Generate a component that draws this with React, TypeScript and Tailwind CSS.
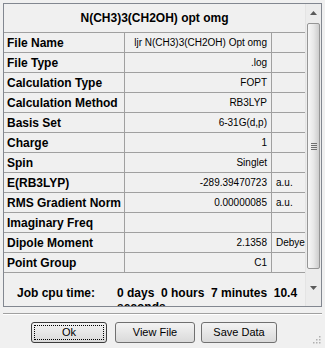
import React from 'react';

type Row = { label: string; value: string; unit?: string };

const rows: Row[] = [
  { label: 'File Name', value: 'ljr N(CH3)3(CH2OH) Opt omg' },
  { label: 'File Type', value: '.log' },
  { label: 'Calculation Type', value: 'FOPT' },
  { label: 'Calculation Method', value: 'RB3LYP' },
  { label: 'Basis Set', value: '6-31G(d,p)' },
  { label: 'Charge', value: '1' },
  { label: 'Spin', value: 'Singlet' },
  { label: 'E(RB3LYP)', value: '-289.39470723', unit: 'a.u.' },
  { label: 'RMS Gradient Norm', value: '0.00000085', unit: 'a.u.' },
  { label: 'Imaginary Freq', value: '' },
  { label: 'Dipole Moment', value: '2.1358', unit: 'Debye' },
  { label: 'Point Group', value: 'C1' },
];

function Arrow({ up }: { up?: boolean }) {
  return (
    <svg width="7" height="4" viewBox="0 0 7 4">
      <path d={up ? 'M0 4 L3.5 0 L7 4 Z' : 'M0 0 L3.5 4 L7 0 Z'} fill="#5a5a5a" />
    </svg>
  );
}

function ScrollBar() {
  return (
    <div className="w-[16px] flex flex-col bg-[#ececec] border-l border-[#e4e4e4]">
      <div className="h-[17px] flex items-center justify-center">
        <Arrow up />
      </div>
      <div className="mt-[2px] mx-[1px] h-[246px] rounded-[2px] border border-[#959595] bg-linear-to-r from-[#f7f7f7] via-[#e8e8e8] to-[#cdcdcd] flex flex-col items-center justify-center gap-[1px]">
        {[0, 1, 2, 3].map((i) => (
          <div key={i} className="w-[6px] h-[1px] bg-[#6f6f6f]" />
        ))}
      </div>
      <div className="flex-1 flex items-center justify-center">
        <Arrow />
      </div>
    </div>
  );
}

function Btn({ label, width, focus }: { label: string; width: string; focus?: boolean }) {
  return (
    <button
      type="button"
      className={`${width} h-[21px] rounded-[3px] border ${
        focus ? 'border-[#3c3c3c]' : 'border-[#707070]'
      } bg-linear-to-b from-[#f3f3f3] to-[#dadada] p-[2px] text-[11px] leading-none`}
    >
      <span
        className={`h-full w-full flex items-center justify-center ${
          focus ? 'border border-dotted border-black' : ''
        }`}
      >
        {label}
      </span>
    </button>
  );
}

export default function App() {
  return (
    <div className="w-[325px] h-[348px] bg-[#f0f0f0] overflow-hidden relative font-['Liberation_Sans',Arial,sans-serif] text-black">
      <div className="ml-[3px] mt-[3px] w-[319px] h-[304px] border border-[#828790] flex overflow-hidden">
        <div className="w-[301px] flex flex-col">
          <div className="h-[29px] shrink-0 border-b border-[#a0a0a0] flex items-center justify-center font-bold text-[12px]">
            N(CH3)3(CH2OH) opt omg
          </div>
          {rows.map((r) => (
            <div key={r.label} className="h-[20px] shrink-0 flex border-b border-[#a0a0a0]">
              <div className="w-[121px] border-r border-[#a0a0a0] pl-[3px] flex items-center font-bold text-[12px] whitespace-nowrap">
                {r.label}
              </div>
              <div className="w-[147px] border-r border-[#a0a0a0] pr-[4px] flex items-center justify-end text-[10px] whitespace-nowrap">
                {r.value}
              </div>
              <div className="flex-1 pl-[4px] flex items-center text-[10px] whitespace-nowrap overflow-hidden">
                {r.unit}
              </div>
            </div>
          ))}
          <div className="flex-1 overflow-hidden flex pt-[13px] font-bold text-[12px] leading-[14px]">
            <div className="w-[113px] pl-[13px] shrink-0">Job cpu time:</div>
            <div className="w-[185px] whitespace-pre-wrap">0 days  0 hours  7 minutes  10.4 seconds</div>
          </div>
        </div>
        <ScrollBar />
      </div>
      <div className="mt-[6px] mx-[3px] h-[2px] border-t border-[#a0a0a0] border-b border-b-white" />
      <div className="mt-[7px] flex pl-[31px]">
        <Btn label="Ok" width="w-[76px]" focus />
        <div className="w-[8px]" />
        <Btn label="View File" width="w-[80px]" />
        <div className="w-[6px]" />
        <Btn label="Save Data" width="w-[76px]" />
      </div>
      <svg className="absolute right-[4px] bottom-[4px]" width="8" height="8" viewBox="0 0 8 8">
        {[
          [6, 0],
          [3, 3],
          [6, 3],
          [0, 6],
          [3, 6],
          [6, 6],
        ].map(([x, y], i) => (
          <rect key={i} x={x} y={y} width="1.5" height="1.5" fill="#b0b0b0" />
        ))}
      </svg>
    </div>
  );
}
